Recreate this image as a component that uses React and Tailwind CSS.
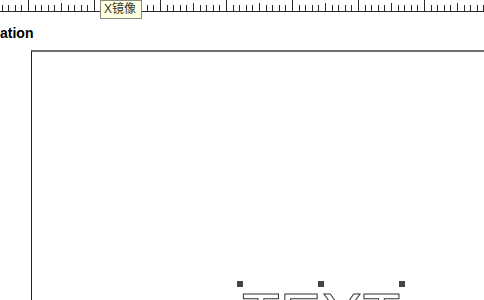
const Ruler = () => {
  const ticks = [];
  for (let i = -4; i < 70; i++) ticks.push(28 + i * 6.6);
  return (
    <svg width="484" height="12" className="block">
      {ticks.map((x, i) => {
        const k = ((i - 4) % 10 + 10) % 10;
        const top = k === 0 ? 0 : k === 5 ? 3 : 5;
        const px = Math.round(x) + 0.5;
        return <line key={i} x1={px} x2={px} y1={top} y2={11} stroke="#2a2a2a" strokeWidth="1" />;
      })}
      <line x1="0" x2="484" y1="11.5" y2="11.5" stroke="#2a2a2a" strokeWidth="1" />
    </svg>
  );
};

const Handle = () => <span className="block w-[6px] h-[6px] bg-[#444]" />;

export default function App() {
  return (
    <div className="relative w-[484px] h-[300px] overflow-hidden bg-white flex flex-col font-['Liberation_Sans',Arial,sans-serif]">
      <div className="relative h-[12px]">
        <Ruler />
        {/* tooltip */}
        <div className="absolute left-[100px] top-0 h-[19px] w-[42px] border border-[#8a8a7a] bg-[#ffffe1] text-[12px] leading-[17px] text-[#333] px-[3px] font-['Liberation_Sans','Noto_Sans_CJK_SC',sans-serif]">
          X镜像
        </div>
      </div>
      <div className="mt-[13px] text-[14px] leading-[16px] font-bold text-black">ation</div>
      <div className="relative mt-[9px] ml-[31px] flex-1 border-t-2 border-l border-t-[#6e6e6e] border-l-[#222]">
        {/* selected text object */}
        <div className="absolute left-[205px] top-[229px] w-[168px] flex flex-col">
          <div className="flex justify-between">
            <Handle />
            <Handle />
            <Handle />
          </div>
          <div className="ml-[5px] mt-[-3px] text-[62px] leading-none text-transparent [-webkit-text-stroke:1px_#333] font-['Liberation_Sans',sans-serif]">
            TEXT
          </div>
        </div>
      </div>
    </div>
  );
}
